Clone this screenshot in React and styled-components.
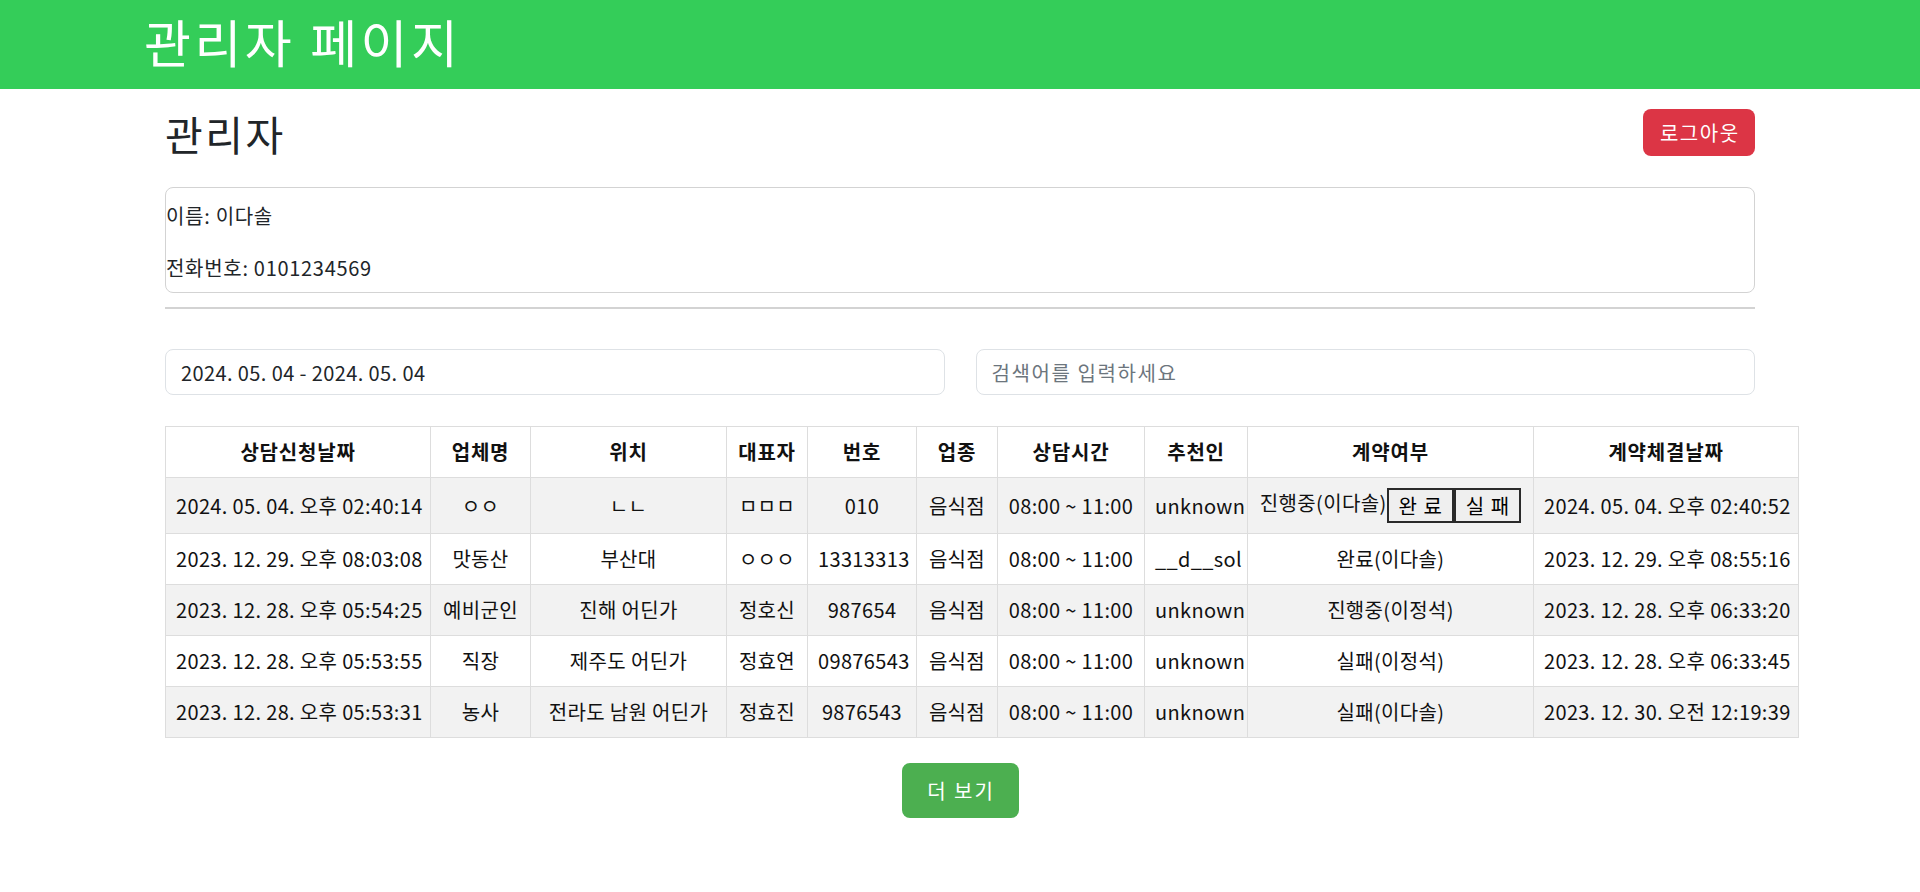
import React from 'react';
import styled, { createGlobalStyle } from 'styled-components';

const Global = createGlobalStyle`
  * { box-sizing: border-box; }
  html, body { margin: 0; padding: 0; background: #fff; }
  body {
    font-family: "Noto Sans CJK KR", "Noto Sans", sans-serif;
    color: #212529;
  }
`;

const TopBar = styled.header`
  height: 89px;
  background: #34cd59;
  display: flex;
  align-items: center;
  padding: 0 0 8px 144px;
`;

const BrandTitle = styled.h1`
  margin: 0;
  font-size: 51px;
  font-weight: 400;
  line-height: 60px;
  letter-spacing: 3.5px;
  color: #fff;
`;

const Container = styled.main`
  width: 1590px;
  margin: 0 auto;
  padding-top: 20px;
  padding-bottom: 40px;
`;

const TitleRow = styled.div`
  display: flex;
  justify-content: space-between;
  align-items: center;
  height: 47px;
`;

const PageTitle = styled.h2`
  margin: 0;
  font-size: 41px;
  font-weight: 400;
  line-height: 48px;
  letter-spacing: 2.5px;
`;

const FilledButton = styled.button`
  font-family: inherit;
  font-size: 20px;
  line-height: 30px;
  letter-spacing: ${(p) => p.$ls};
  color: #fff;
  background: ${(p) => p.$bg};
  border: none;
  border-radius: 8px;
  width: ${(p) => p.$w}px;
  height: ${(p) => p.$h}px;
  padding: 0 0 0 ${(p) => p.$ls};
  cursor: pointer;
`;

const InfoBox = styled.section`
  margin-top: 31px;
  border: 1px solid #d3d3d3;
  border-radius: 8px;
  padding: 13px 0 9px 0;
  display: flex;
  flex-direction: column;
  gap: 22px;
`;

const InfoLine = styled.p`
  margin: 0;
  font-size: 20px;
  line-height: 30px;
  letter-spacing: 0.7px;
`;

const Divider = styled.div`
  margin-top: 14px;
  height: 2px;
  background: #d3d3d3;
`;

const FilterRow = styled.div`
  margin-top: 40px;
  display: grid;
  grid-template-columns: 1fr 1fr;
  gap: 31px;
`;

const TextInput = styled.input`
  height: 46px;
  width: 100%;
  border: 1px solid #dee2e6;
  border-radius: 8px;
  padding: 0 15px;
  font-family: inherit;
  font-size: 20px;
  letter-spacing: 0.4px;
  color: #212529;
  background: #fff;
  outline: none;
  &::placeholder {
    color: #6c757d;
    letter-spacing: 1.6px;
  }
`;

const Table = styled.table`
  margin-top: 31px;
  width: 1633px;
  table-layout: fixed;
  border-collapse: collapse;
  font-size: 20px;
  line-height: 30px;
  letter-spacing: 0.35px;
  color: #111;
`;

const Col = styled.col`
  width: ${(p) => p.$w}px;
`;

const HeadCell = styled.th`
  border: 1px solid #ddd;
  padding: 10px;
  font-weight: 700;
  letter-spacing: 0.8px;
  text-align: center;
  white-space: nowrap;
  background: #fff;
`;

const BodyRow = styled.tr`
  background: ${(p) => (p.$striped ? '#f2f2f2' : '#fff')};
`;

const Cell = styled.td`
  border: 1px solid #ddd;
  padding: 10px;
  text-align: center;
  white-space: nowrap;
  vertical-align: middle;
`;

const ActionButton = styled.button`
  font-family: inherit;
  font-size: 20px;
  line-height: 29px;
  letter-spacing: 1px;
  padding: 1px 9px 1px 10px;
  border: 2px solid #2a2a2a;
  background: #efefef;
  color: #000;
  border-radius: 0;
  vertical-align: middle;
  margin: 0;
  cursor: pointer;
`;

const MoreWrap = styled.div`
  margin-top: 25px;
  display: flex;
  justify-content: center;
`;

const widths = [265, 100, 196, 81, 109, 81, 147, 103, 286, 265];
const headers = ['상담신청날짜', '업체명', '위치', '대표자', '번호', '업종', '상담시간', '추천인', '계약여부', '계약체결날짜'];

const rows = [
  ['2024. 05. 04. 오후 02:40:14', 'ㅇㅇ', 'ㄴㄴ', 'ㅁㅁㅁ', '010', '음식점', '08:00 ~ 11:00', 'unknown', 'pending', '2024. 05. 04. 오후 02:40:52'],
  ['2023. 12. 29. 오후 08:03:08', '맛동산', '부산대', 'ㅇㅇㅇ', '13313313', '음식점', '08:00 ~ 11:00', '__d__sol', '완료(이다솔)', '2023. 12. 29. 오후 08:55:16'],
  ['2023. 12. 28. 오후 05:54:25', '예비군인', '진해 어딘가', '정호신', '987654', '음식점', '08:00 ~ 11:00', 'unknown', '진행중(이정석)', '2023. 12. 28. 오후 06:33:20'],
  ['2023. 12. 28. 오후 05:53:55', '직장', '제주도 어딘가', '정효연', '09876543', '음식점', '08:00 ~ 11:00', 'unknown', '실패(이정석)', '2023. 12. 28. 오후 06:33:45'],
  ['2023. 12. 28. 오후 05:53:31', '농사', '전라도 남원 어딘가', '정효진', '9876543', '음식점', '08:00 ~ 11:00', 'unknown', '실패(이다솔)', '2023. 12. 30. 오전 12:19:39'],
];

export default function App() {
  return (
    <>
      <Global />
      <TopBar>
        <BrandTitle>관리자 페이지</BrandTitle>
      </TopBar>
      <Container>
        <TitleRow>
          <PageTitle>관리자</PageTitle>
          <FilledButton $bg="#dc3545" $w={112} $h={47} $ls="1.5px">로그아웃</FilledButton>
        </TitleRow>
        <InfoBox>
          <InfoLine>이름: 이다솔</InfoLine>
          <InfoLine>전화번호: 0101234569</InfoLine>
        </InfoBox>
        <Divider />
        <FilterRow>
          <TextInput defaultValue="2024. 05. 04 - 2024. 05. 04" />
          <TextInput placeholder="검색어를 입력하세요" />
        </FilterRow>
        <Table>
          <colgroup>
            {widths.map((w, i) => (
              <Col key={i} $w={w} />
            ))}
          </colgroup>
          <thead>
            <tr>
              {headers.map((h) => (
                <HeadCell key={h}>{h}</HeadCell>
              ))}
            </tr>
          </thead>
          <tbody>
            {rows.map((r, ri) => (
              <BodyRow key={ri} $striped={ri % 2 === 0}>
                {r.map((c, ci) => (
                  <Cell key={ci}>
                    {c === 'pending' ? (
                      <>
                        진행중(이다솔)<ActionButton>완 료</ActionButton><ActionButton>실 패</ActionButton>
                      </>
                    ) : (
                      c
                    )}
                  </Cell>
                ))}
              </BodyRow>
            ))}
          </tbody>
        </Table>
        <MoreWrap>
          <FilledButton $bg="#4caf50" $w={117} $h={55} $ls="2px">더 보기</FilledButton>
        </MoreWrap>
      </Container>
    </>
  );
}
